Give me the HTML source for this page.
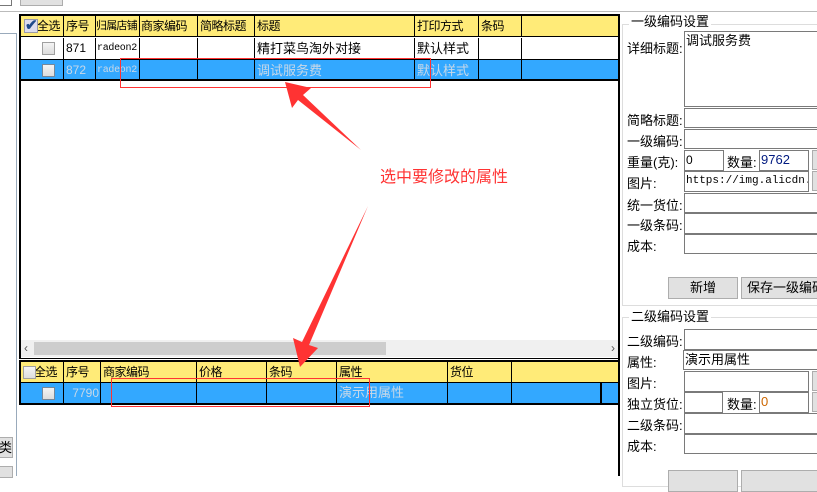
<!DOCTYPE html>
<html><head><meta charset="utf-8"><style>
*{box-sizing:border-box;margin:0;padding:0}
body{width:817px;height:476px;overflow:hidden;background:#fff;position:relative;font-family:"Liberation Sans","Noto Sans CJK SC","WenQuanYi Zen Hei",sans-serif;font-size:12px;color:#000}
.a{position:absolute}
.cell{position:absolute;top:0;height:100%;border-right:1px solid #000;padding-left:2px;line-height:21px;white-space:nowrap;overflow:hidden}
.cb{position:absolute;width:13px;height:13px;border:1px solid #a0a0a0;background:linear-gradient(#f4f4f4,#ddd)}
.lbl{position:absolute;left:627px;font-size:13px}
.in{position:absolute;background:#fff;border:1px solid #7a7a7a;border-right:none;font-size:12px;padding-left:1px;line-height:18px;overflow:hidden;white-space:nowrap}
.btn{position:absolute;background:#e1e1e1;border:1px solid #adadad;text-align:center;line-height:20px;font-size:13px}
.hd .cell{letter-spacing:-0.5px}
</style></head><body>
<!-- top -->
<div class="a" style="left:0;top:0;width:12px;height:6px;border:1px solid #777;border-top:none;border-left:none"></div>
<div class="btn" style="left:20px;top:-4px;width:43px;height:10px;font-size:11px;line-height:4px"></div>
<div class="a" style="left:0;top:11px;width:817px;height:1px;background:#bbb"></div>
<div class="a" style="left:0;top:33px;width:17px;height:443px;border-top:1px solid #9ab;border-right:1px solid #9ab"></div>
<div class="btn" style="left:-2px;top:437px;width:15px;height:21px;font-size:13px">类</div>
<div class="btn" style="left:-2px;top:466px;width:15px;height:12px"></div>
<!-- grid1 -->
<div class="a" style="left:19px;top:14px;width:601px;height:345px;border:2px solid #000;border-bottom:1px solid #000;background:#fff"></div>
<div class="a hd" style="left:21px;top:16px;width:597px;height:21px;background:#ffeb78;border-bottom:1px solid #000;font-size:12px">
<div class="cell" style="left:0;width:43px;padding-left:16px">全选</div>
<div class="cell" style="left:43px;width:32px">序号</div>
<div class="cell" style="left:75px;width:44px;padding-left:0;font-size:11px;letter-spacing:-0.8px">归属店铺</div>
<div class="cell" style="left:119px;width:58px;padding-left:1px">商家编码</div>
<div class="cell" style="left:177px;width:57px">简略标题</div>
<div class="cell" style="left:234px;width:160px">标题</div>
<div class="cell" style="left:394px;width:64px">打印方式</div>
<div class="cell" style="left:458px;width:43px">条码</div>
</div>
<div class="a" style="left:24px;top:19px;width:14px;height:14px;background:#dde;border:1px solid #99a;color:#1e4a8a;font-size:15px;line-height:12px;font-weight:bold">✔</div>
<div class="a" style="left:21px;top:38px;width:597px;height:22px;background:#fff;border-bottom:1px solid #000;font-size:13px">
<div class="cell" style="left:0;width:43px"></div>
<div class="cell" style="left:43px;width:32px;font-size:12px">871</div>
<div class="cell" style="left:75px;width:44px;padding-left:1px;font-family:'Liberation Mono',monospace;font-size:10px;letter-spacing:-0.3px">radeon2</div>
<div class="cell" style="left:119px;width:58px"></div>
<div class="cell" style="left:177px;width:57px"></div>
<div class="cell" style="left:234px;width:160px">精打菜鸟淘外对接</div>
<div class="cell" style="left:394px;width:64px">默认样式</div>
<div class="cell" style="left:458px;width:43px"></div>
</div>
<div class="cb" style="left:42px;top:42px"></div>
<div class="a" style="left:21px;top:60px;width:597px;height:21px;background:#33a8ff;border-bottom:2px solid #000;font-size:13px;color:#c8d8e8">
<div class="cell" style="left:0;width:43px"></div>
<div class="cell" style="left:43px;width:32px;font-size:12px">872</div>
<div class="cell" style="left:75px;width:44px;padding-left:1px;font-family:'Liberation Mono',monospace;font-size:10px;letter-spacing:-0.3px">radeon2</div>
<div class="cell" style="left:119px;width:58px"></div>
<div class="cell" style="left:177px;width:57px"></div>
<div class="cell" style="left:234px;width:160px">调试服务费</div>
<div class="cell" style="left:394px;width:64px">默认样式</div>
<div class="cell" style="left:458px;width:43px"></div>
</div>
<div class="cb" style="left:42px;top:64px;border-color:#789"></div>
<!-- scrollbar -->
<div class="a" style="left:21px;top:340px;width:597px;height:17px;background:#f0f0f0"></div>
<div class="a" style="left:34px;top:342px;width:352px;height:13px;background:#cdcdcd"></div>
<div class="a" style="left:24px;top:340px;font-size:12px;color:#555;line-height:16px">‹</div>
<div class="a" style="left:611px;top:340px;font-size:12px;color:#555;line-height:16px">›</div>
<!-- grid2 -->
<div class="a" style="left:19px;top:360px;width:601px;height:45px;border:2px solid #000"></div>
<div class="a hd" style="left:21px;top:362px;width:597px;height:21px;background:#ffeb78;border-bottom:1px solid #000;font-size:12px">
<div class="cell" style="left:0;width:43px;padding-left:13px">全选</div>
<div class="cell" style="left:43px;width:37px">序号</div>
<div class="cell" style="left:80px;width:96px">商家编码</div>
<div class="cell" style="left:176px;width:70px">价格</div>
<div class="cell" style="left:246px;width:70px">条码</div>
<div class="cell" style="left:316px;width:111px">属性</div>
<div class="cell" style="left:427px;width:64px">货位</div>
<div class="cell" style="left:491px;width:106px;border-right:none"></div>
</div>
<div class="cb" style="left:23px;top:366px"></div>
<div class="a" style="left:21px;top:383px;width:597px;height:20px;background:#33a8ff;font-size:13px;color:#c8d8e8">
<div class="cell" style="left:0;width:43px;line-height:20px"></div>
<div class="cell" style="left:43px;width:37px;text-align:right;padding-right:1px;font-size:12px;line-height:20px">7790</div>
<div class="cell" style="left:80px;width:96px"></div>
<div class="cell" style="left:176px;width:70px"></div>
<div class="cell" style="left:246px;width:70px"></div>
<div class="cell" style="left:316px;width:111px;line-height:20px">演示用属性</div>
<div class="cell" style="left:427px;width:64px"></div>
<div class="cell" style="left:491px;width:90px;border-right:2px solid #000"></div>
</div>
<div class="cb" style="left:42px;top:387px;border-color:#789"></div>
<!-- right panel -->
<div class="a" style="left:618px;top:14px;width:2px;height:462px;background:#000"></div>
<div class="a" style="left:622px;top:24px;width:200px;height:282px;border:1px solid #ddd;border-right:none"></div>
<div class="a" style="left:629px;top:14px;background:#fff;padding:0 2px;font-size:13px;line-height:16px">一级编码设置</div>
<div class="lbl" style="top:38px">详细标题:</div>
<div class="in" style="left:684px;top:31px;width:140px;height:76px;font-size:13px">调试服务费</div>
<div class="lbl" style="top:110px">简略标题:</div>
<div class="in" style="left:684px;top:108px;width:140px;height:20px"></div>
<div class="lbl" style="top:131px">一级编码:</div>
<div class="in" style="left:684px;top:129px;width:140px;height:20px"></div>
<div class="lbl" style="top:152px">重量(克):</div>
<div class="in" style="left:684px;top:150px;width:40px;height:21px;border-right:1px solid #7a7a7a">0</div>
<div class="a" style="left:727px;top:152px;font-size:13px">数量:</div>
<div class="in" style="left:759px;top:150px;width:50px;height:21px;border-right:1px solid #7a7a7a;color:#001a80;font-size:13px">9762</div>
<div class="btn" style="left:812px;top:150px;width:10px;height:20px"></div>
<div class="lbl" style="top:173px">图片:</div>
<div class="in" style="left:684px;top:171px;width:125px;height:21px;border-right:1px solid #7a7a7a;font-family:'Liberation Mono',monospace;font-size:11px">https://img.alicdn.com</div>
<div class="btn" style="left:812px;top:171px;width:10px;height:20px"></div>
<div class="lbl" style="top:195px">统一货位:</div>
<div class="in" style="left:684px;top:193px;width:140px;height:20px"></div>
<div class="lbl" style="top:215px">一级条码:</div>
<div class="in" style="left:684px;top:213px;width:140px;height:21px"></div>
<div class="lbl" style="top:236px">成本:</div>
<div class="in" style="left:684px;top:234px;width:140px;height:20px"></div>
<div class="btn" style="left:668px;top:277px;width:70px;height:22px">新增</div>
<div class="btn" style="left:741px;top:277px;width:80px;height:22px;text-align:left;padding-left:5px;white-space:nowrap;overflow:hidden">保存一级编码</div>
<div class="a" style="left:622px;top:317px;width:200px;height:170px;border:1px solid #ddd;border-right:none"></div>
<div class="a" style="left:629px;top:309px;background:#fff;padding:0 2px;font-size:13px;line-height:16px">二级编码设置</div>
<div class="lbl" style="top:331px">二级编码:</div>
<div class="in" style="left:684px;top:329px;width:140px;height:21px"></div>
<div class="lbl" style="top:352px">属性:</div>
<div class="in" style="left:683px;top:350px;width:140px;height:20px;font-size:13px">演示用属性</div>
<div class="lbl" style="top:373px">图片:</div>
<div class="in" style="left:684px;top:371px;width:125px;height:21px;border-right:1px solid #7a7a7a"></div>
<div class="btn" style="left:812px;top:371px;width:10px;height:20px"></div>
<div class="lbl" style="top:394px">独立货位:</div>
<div class="in" style="left:684px;top:392px;width:39px;height:21px;border-right:1px solid #7a7a7a"></div>
<div class="a" style="left:727px;top:394px;font-size:13px">数量:</div>
<div class="in" style="left:759px;top:392px;width:50px;height:21px;border-right:1px solid #7a7a7a;color:#c60;font-size:13px">0</div>
<div class="btn" style="left:812px;top:392px;width:10px;height:20px"></div>
<div class="lbl" style="top:415px">二级条码:</div>
<div class="in" style="left:684px;top:413px;width:140px;height:21px"></div>
<div class="lbl" style="top:436px">成本:</div>
<div class="in" style="left:684px;top:434px;width:140px;height:20px"></div>
<div class="btn" style="left:668px;top:470px;width:70px;height:22px"></div>
<div class="btn" style="left:741px;top:470px;width:80px;height:22px"></div>
<!-- annotations -->
<div class="a" style="left:120px;top:58px;width:311px;height:30px;border:1px solid #f33"></div>
<div class="a" style="left:111px;top:378px;width:259px;height:29px;border:1px solid #f33"></div>
<div class="a" style="left:380px;top:168px;color:#f33;font-size:16px;line-height:20px">选中要修改的属性</div>
<svg class="a" style="left:0;top:0" width="817" height="476">
<polygon points="285,82 311,88 303,95 361,150 298,100 292,108" fill="#f33"/>
<polygon points="300,367 293,338 302,342 368,206 309,345 318,348" fill="#f33"/>
</svg>
</body></html>
